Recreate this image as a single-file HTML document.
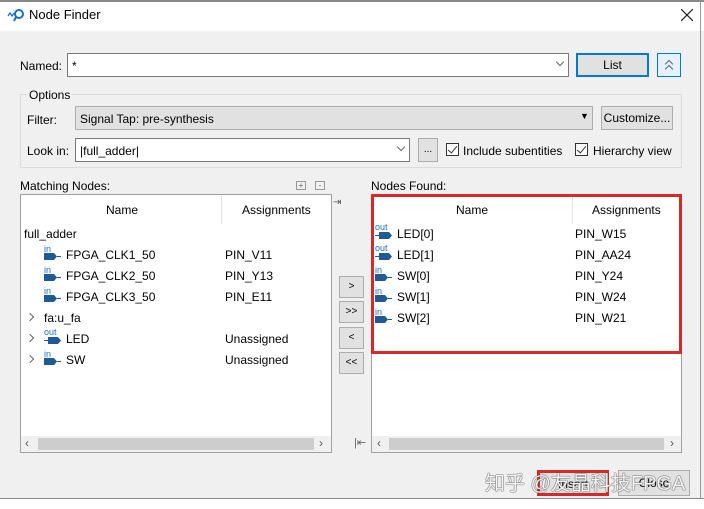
<!DOCTYPE html><html><head><meta charset="utf-8"><style>
*{margin:0;padding:0;box-sizing:border-box}
body{width:704px;height:509px;background:#f0f0f0;font-family:"Liberation Sans",sans-serif;font-size:12px;color:#000;position:relative;overflow:hidden}
.a{position:absolute;white-space:nowrap}
.box{position:absolute;background:#fff;border:1px solid #a0a0a0}
.btn{position:absolute;background:#e1e1e1;border:1px solid #adadad;text-align:center}
.cb{position:absolute;width:13px;height:13px;border:1px solid #333;background:#fff}
.cb:after{content:"";position:absolute;left:3px;top:0px;width:4px;height:8px;border:solid #333;border-width:0 1.5px 1.5px 0;transform:rotate(40deg)}
.chev{position:absolute;width:6px;height:6px;border:solid #666;border-width:0 1px 1px 0;transform:rotate(45deg)}
</style></head><body>
<div class="a" style="left:0;top:0;width:704px;height:31px;background:#fff"></div>
<div class="a" style="left:0;top:0;width:704px;height:2px;background:#888"></div>
<svg class="a" style="left:7px;top:8px" width="18" height="14"><path d="M1 8 l2-3 2 3 2-3" stroke="#1a6fbf" fill="none" stroke-width="1.3"/><circle cx="12" cy="6" r="4" stroke="#1a6fbf" fill="none" stroke-width="2"/><path d="M9 9 l-2 4" stroke="#1a6fbf" stroke-width="2"/></svg>
<div class="a" style="left:29px;top:7px;font-size:13px">Node Finder</div>
<svg class="a" style="left:681px;top:9px" width="12" height="12"><path d="M0 0L12 12M12 0L0 12" stroke="#222" stroke-width="1.2"/></svg>

<div class="a" style="left:20px;top:59px">Named:</div>
<div class="box" style="left:67px;top:53px;width:502px;height:24px;border-color:#7a7a7a"></div>
<div class="a" style="left:72px;top:59px">*</div>
<div class="chev" style="left:557px;top:59px"></div>
<div class="btn" style="left:576px;top:53px;width:73px;height:24px;border:2px solid #0078d7;line-height:20px">List</div>
<div class="btn" style="left:657px;top:53px;width:24px;height:24px;border-color:#0078d7;background:#e5f1fb"></div>
<div class="chev" style="left:666px;top:61px;transform:rotate(225deg)"></div>
<div class="chev" style="left:666px;top:66px;transform:rotate(225deg)"></div>

<div class="a" style="left:20px;top:94px;width:662px;height:74px;border:1px solid #dcdcdc"></div>
<div class="a" style="left:27px;top:88px;background:#f0f0f0;padding:0 2px">Options</div>
<div class="a" style="left:27px;top:113px">Filter:</div>
<div class="a" style="left:75px;top:106px;width:518px;height:24px;background:#e1e1e1;border:1px solid #adadad"></div>
<div class="a" style="left:80px;top:112px">Signal Tap: pre-synthesis</div>
<div class="a" style="left:580px;top:111px;font-size:9px">▼</div>
<div class="btn" style="left:601px;top:106px;width:72px;height:24px;line-height:22px">Customize...</div>
<div class="a" style="left:27px;top:144px">Look in:</div>
<div class="box" style="left:75px;top:138px;width:335px;height:24px;border-color:#7a7a7a"></div>
<div class="a" style="left:80px;top:144px">|full_adder|</div>
<div class="chev" style="left:398px;top:144px"></div>
<div class="btn" style="left:418px;top:138px;width:20px;height:24px;line-height:22px;font-size:10px">...</div>
<div class="cb" style="left:446px;top:143px"></div>
<div class="a" style="left:463px;top:144px">Include subentities</div>
<div class="cb" style="left:575px;top:143px"></div>
<div class="a" style="left:593px;top:144px">Hierarchy view</div>

<div class="a" style="left:20px;top:179px">Matching Nodes:</div>
<div class="a" style="left:296px;top:181px;width:10px;height:9px;border:1px solid #999;font-size:8px;line-height:7px;text-align:center;color:#666">+</div>
<div class="a" style="left:315px;top:181px;width:10px;height:9px;border:1px solid #999;font-size:8px;line-height:7px;text-align:center;color:#666">-</div>
<div class="a" style="left:371px;top:179px">Nodes Found:</div>
<div class="a" style="left:333px;top:197px;font-size:10px;color:#555">⇥</div>

<div class="box" style="left:20px;top:194px;width:312px;height:259px"></div>
<div class="a" style="left:221px;top:196px;width:1px;height:28px;background:#e5e5e5"></div>
<div class="a" style="left:106px;top:203px">Name</div>
<div class="a" style="left:242px;top:203px">Assignments</div>
<div class="a" style="left:24px;top:227px">full_adder</div>
<div class="a" style="left:66px;top:248px">FPGA_CLK1_50</div><div class="a" style="left:225px;top:248px">PIN_V11</div>
<div class="a" style="left:66px;top:269px">FPGA_CLK2_50</div><div class="a" style="left:225px;top:269px">PIN_Y13</div>
<div class="a" style="left:66px;top:290px">FPGA_CLK3_50</div><div class="a" style="left:225px;top:290px">PIN_E11</div>
<div class="a" style="left:44px;top:311px">fa:u_fa</div>
<div class="a" style="left:66px;top:332px">LED</div><div class="a" style="left:225px;top:332px">Unassigned</div>
<div class="a" style="left:66px;top:353px">SW</div><div class="a" style="left:225px;top:353px">Unassigned</div>
<div class="chev" style="left:27px;top:314px;transform:rotate(-45deg)"></div>
<div class="chev" style="left:27px;top:335px;transform:rotate(-45deg)"></div>
<div class="chev" style="left:27px;top:356px;transform:rotate(-45deg)"></div>
<div class="a" style="left:21px;top:436px;width:310px;height:16px;background:#f0f0f0"></div>
<div class="a" style="left:38px;top:438px;width:276px;height:12px;background:#cdcdcd"></div>
<div class="a" style="left:25px;top:436px;color:#555">‹</div><div class="a" style="left:319px;top:436px;color:#555">›</div>

<div class="btn" style="left:339px;top:276px;width:25px;height:22px;line-height:20px;font-size:10px">&gt;</div>
<div class="btn" style="left:339px;top:301px;width:25px;height:22px;line-height:20px;font-size:10px">&gt;&gt;</div>
<div class="btn" style="left:339px;top:327px;width:25px;height:22px;line-height:20px;font-size:10px">&lt;</div>
<div class="btn" style="left:339px;top:352px;width:25px;height:22px;line-height:20px;font-size:10px">&lt;&lt;</div>
<div class="a" style="left:354px;top:436px;font-size:11px;color:#666">|⇤</div>

<div class="box" style="left:371px;top:194px;width:311px;height:259px"></div>
<div class="a" style="left:572px;top:196px;width:1px;height:28px;background:#e5e5e5"></div>
<div class="a" style="left:456px;top:203px">Name</div>
<div class="a" style="left:592px;top:203px">Assignments</div>
<div class="a" style="left:397px;top:227px">LED[0]</div><div class="a" style="left:575px;top:227px">PIN_W15</div>
<div class="a" style="left:397px;top:248px">LED[1]</div><div class="a" style="left:575px;top:248px">PIN_AA24</div>
<div class="a" style="left:397px;top:269px">SW[0]</div><div class="a" style="left:575px;top:269px">PIN_Y24</div>
<div class="a" style="left:397px;top:290px">SW[1]</div><div class="a" style="left:575px;top:290px">PIN_W24</div>
<div class="a" style="left:397px;top:311px">SW[2]</div><div class="a" style="left:575px;top:311px">PIN_W21</div>
<div class="a" style="left:371px;top:194px;width:311px;height:160px;border:3px solid #d42a2a"></div>
<div class="a" style="left:372px;top:436px;width:309px;height:16px;background:#f0f0f0"></div>
<div class="a" style="left:389px;top:438px;width:275px;height:12px;background:#cdcdcd"></div>
<div class="a" style="left:377px;top:436px;color:#555">‹</div><div class="a" style="left:670px;top:436px;color:#555">›</div>

<svg class="a" style="left:0;top:0" width="704" height="509">
<defs>
<g id="pin"><text x="0" y="7" font-size="9" fill="#1a6fbf" font-family="Liberation Sans">in</text><path d="M0 8h10l3 3.5-3 3.5H0z" fill="#1f5a96"/><path d="M13 11.5h4" stroke="#1f5a96"/></g>
<g id="pout"><text x="0" y="6" font-size="9" fill="#1a6fbf" font-family="Liberation Sans">out</text><path d="M0 11.5h5" stroke="#1f5a96"/><path d="M4 8h10l3 3.5-3 3.5H4z" fill="#1f5a96"/></g>
</defs>
<use href="#pin" x="44" y="245"/><use href="#pin" x="44" y="266"/><use href="#pin" x="44" y="287"/>
<use href="#pout" x="44" y="329"/><use href="#pin" x="44" y="350"/>
<use href="#pout" x="375" y="224"/><use href="#pout" x="375" y="245"/>
<use href="#pin" x="375" y="266"/><use href="#pin" x="375" y="287"/><use href="#pin" x="375" y="308"/>
</svg>

<div class="btn" style="left:537px;top:470px;width:72px;height:26px;line-height:22px;border:3px solid #d42a2a">Insert</div>
<div class="btn" style="left:618px;top:470px;width:72px;height:26px;line-height:24px">Close</div>
<div class="a" style="left:485px;top:467px;font-size:20px;color:#f4f4f4;font-family:'Liberation Sans','Noto Sans CJK SC',sans-serif;text-shadow:0 0 1px #555,0 0 1px #555,0 0 1px #555">知乎 @友晶科技FPGA</div>
<div class="a" style="left:0;top:498px;width:704px;height:1px;background:#888"></div>
<div class="a" style="left:0;top:499px;width:704px;height:10px;background:#fff"></div>
<div class="a" style="left:700px;top:0;width:1px;height:499px;background:#999"></div>
</body></html>
